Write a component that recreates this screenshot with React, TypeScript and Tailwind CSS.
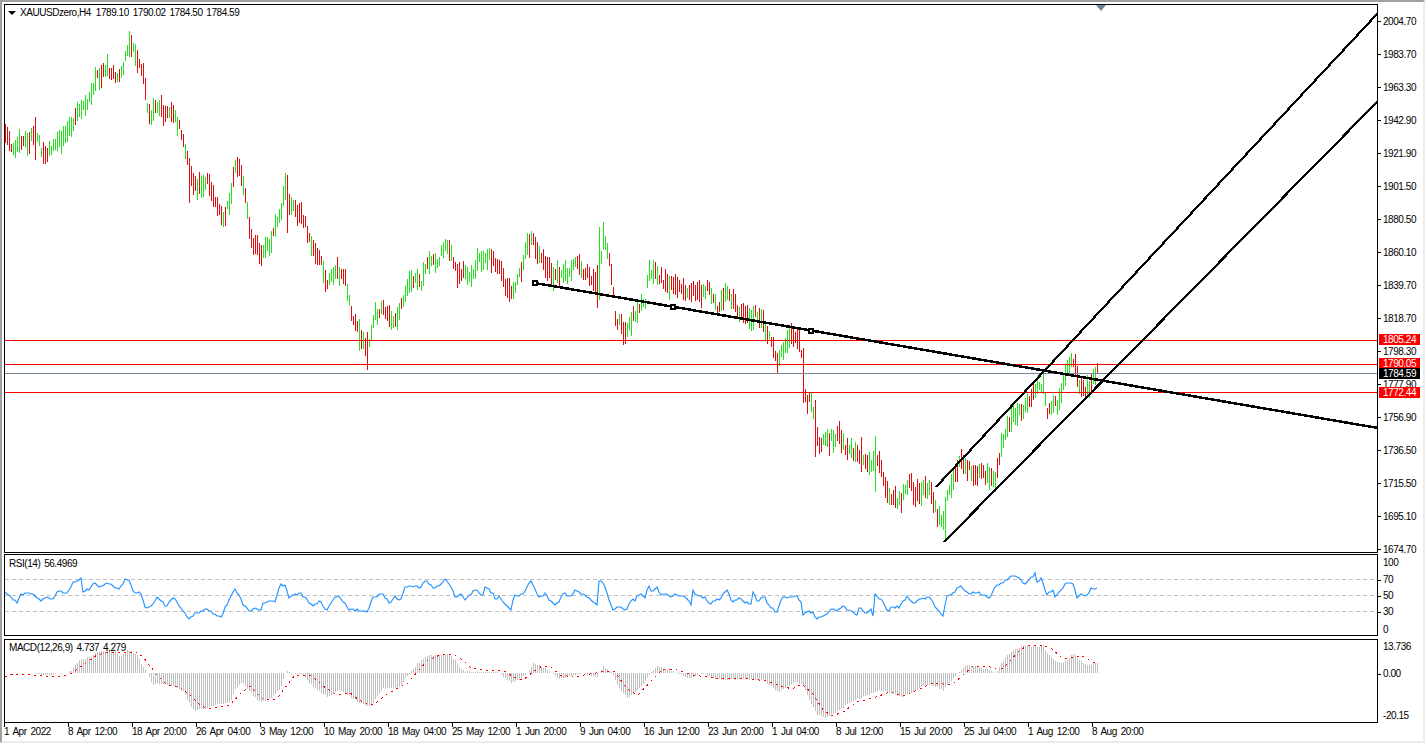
const FONT = "font-['Liberation_Sans',Arial,sans-serif] text-[10px] tracking-[-0.45px] [word-spacing:1.5px] leading-none text-black";

// page-pixel waypoints read off the reference: x, mid y of the bars
const PRICE: [number, number][] = [
  [5,130],[10,145],[13,152],[20,140],[27,142],[35,135],[43,155],[50,150],[57,145],[65,132],[72,125],[82,105],[88,100],[95,80],[102,75],[107,68],[112,72],[118,78],[122,68],[128,50],[132,48],[137,62],[142,70],[147,105],[150,117],[157,105],[165,115],[172,108],[178,125],[183,140],[188,165],[192,185],[200,185],[207,178],[212,190],[222,220],[228,205],[235,170],[239,165],[245,195],[250,240],[262,255],[270,242],[277,225],[282,205],[285,185],[290,205],[300,215],[305,225],[310,245],[320,255],[325,285],[335,270],[345,280],[352,318],[360,335],[367,350],[375,315],[383,310],[392,325],[398,315],[403,300],[410,280],[420,285],[428,262],[432,257],[437,263],[445,245],[450,250],[457,272],[465,272],[470,277],[480,258],[490,256],[500,267],[505,285],[512,296],[520,272],[527,247],[532,237],[540,258],[552,275],[562,277],[575,263],[590,277],[598,285],[603,240],[610,262],[615,318],[625,333],[632,320],[640,303],[645,300],[648,270],[655,272],[665,283],[680,288],[693,290],[700,293],[708,288],[717,307],[728,293],[740,313],[750,317],[755,313],[765,327],[770,340],[777,365],[782,350],[790,336],[800,340],[803,372],[806,402],[812,400],[815,430],[820,445],[830,440],[838,435],[845,446],[855,455],[860,453],[870,468],[875,464],[880,461],[885,487],[888,498],[895,500],[900,503],[905,488],[910,484],[915,495],[922,489],[930,492],[935,508],[940,522],[943,525],[945,500],[948,490],[953,482],[960,460],[965,470],[970,468],[975,477],[980,470],[985,478],[992,475],[996,480],[998,458],[1003,440],[1010,423],[1015,413],[1020,414],[1026,407],[1032,396],[1037,384],[1043,385],[1047,414],[1052,404],[1058,407],[1065,375],[1070,361],[1075,361],[1078,385],[1082,393],[1088,388],[1092,377],[1097,369],
];

// long bars that stand out: x, top, bottom, up
const SPIKES: [number, number, number, boolean][] = [
  [35,117,160,false],[129,31,57,true],[131,35,57,false],[189,158,203,false],[237,157,177,false],[285,173,200,true],[287,175,233,false],[359,319,351,true],[367,332,370,false],[597,265,308,false],[599,227,300,true],[603,222,250,true],[777,353,373,false],[803,348,403,false],[815,400,457,false],[861,437,472,false],[875,436,492,true],[945,497,540,true],[1097,363,373,false],
];

const RSI: [number, number][] = [
  [5,592],[13,600],[17,603],[20,594],[27,593],[33,593],[40,601],[45,597],[53,599],[59,590],[63,592],[68,593],[72,583],[78,582],[81,577],[83,592],[90,588],[95,582],[100,587],[108,582],[115,588],[122,587],[124,580],[129,579],[133,592],[140,593],[145,606],[150,608],[157,598],[167,607],[170,599],[174,598],[180,607],[189,619],[198,612],[207,609],[213,614],[222,617],[224,610],[235,589],[242,602],[250,613],[255,608],[260,612],[263,603],[275,601],[280,584],[283,587],[286,584],[288,598],[300,593],[307,600],[313,606],[320,601],[327,611],[333,599],[340,597],[348,609],[358,610],[367,612],[373,598],[382,593],[389,603],[395,597],[400,600],[405,587],[413,586],[420,588],[423,583],[427,580],[432,588],[440,585],[445,580],[450,585],[456,599],[458,593],[465,599],[475,590],[483,595],[485,587],[493,593],[496,601],[499,595],[507,607],[511,609],[514,596],[522,595],[531,580],[539,597],[545,594],[552,603],[556,605],[564,593],[571,597],[575,591],[582,593],[592,600],[597,605],[599,582],[603,582],[613,610],[620,605],[625,611],[633,598],[635,601],[639,594],[645,597],[648,586],[653,592],[657,588],[660,595],[667,594],[672,597],[675,594],[685,598],[692,605],[693,591],[700,597],[705,597],[709,604],[720,599],[727,589],[732,601],[740,599],[745,603],[752,604],[753,592],[757,601],[765,597],[768,604],[777,613],[782,598],[797,596],[802,603],[803,615],[808,612],[813,613],[816,619],[827,613],[832,609],[838,611],[843,607],[857,614],[859,607],[865,613],[872,608],[873,615],[875,595],[882,600],[888,611],[893,606],[898,608],[907,596],[913,603],[920,598],[930,598],[937,609],[943,615],[947,595],[953,593],[960,585],[965,592],[970,594],[978,592],[989,598],[997,585],[1003,582],[1013,575],[1018,578],[1025,583],[1035,574],[1037,583],[1042,578],[1046,595],[1053,589],[1055,596],[1068,582],[1073,583],[1077,597],[1080,594],[1087,595],[1092,587],[1097,589],
];

const HIST: [number, number][] = [
  [5,671],[33,671],[43,673],[67,671],[72,668],[80,657],[90,655],[97,650],[113,648],[120,655],[128,648],[137,653],[142,663],[147,671],[152,682],[163,682],[173,684],[183,690],[190,703],[195,708],[203,707],[213,703],[230,700],[235,687],[242,680],[250,690],[260,701],[270,697],[280,687],[286,668],[292,672],[302,672],[313,685],[327,695],[340,688],[357,700],[370,705],[382,687],[400,685],[405,677],[410,671],[417,662],[428,653],[440,653],[450,652],[458,663],[465,670],[497,670],[512,681],[523,675],[528,670],[533,661],[542,665],[552,671],[558,677],[573,674],[582,671],[597,675],[603,664],[612,671],[618,685],[627,696],[633,692],[643,682],[650,671],[657,664],[667,668],[677,671],[690,677],[700,671],[720,678],[740,677],[763,678],[778,690],[795,680],[803,683],[810,700],[817,712],[825,716],[840,707],[857,697],[880,688],[903,695],[927,682],[943,688],[957,671],[967,663],[987,667],[995,672],[1000,663],[1007,653],[1015,647],[1023,644],[1043,644],[1048,653],[1057,660],[1063,661],[1073,652],[1085,663],[1095,661],[1098,661],
];

const SIGNAL: [number, number][] = [
  [5,675],[13,672],[30,673],[57,675],[70,672],[83,663],[97,653],[110,650],[137,650],[143,655],[157,673],[167,683],[180,685],[190,693],[200,703],[208,707],[230,703],[240,692],[250,684],[263,697],[277,697],[287,683],[295,673],[310,673],[327,687],[337,693],[350,691],[362,700],[373,703],[387,692],[400,685],[407,682],[417,670],[428,658],[440,653],[452,652],[463,658],[470,665],[483,668],[500,668],[507,670],[513,675],[523,678],[533,670],[542,664],[550,664],[560,673],[573,675],[590,672],[607,669],[615,670],[627,687],[638,693],[653,677],[663,667],[677,668],[693,673],[700,674],[720,677],[743,676],[767,679],[778,683],[792,687],[802,682],[813,692],[823,708],[832,714],[843,710],[857,700],[873,696],[890,690],[903,694],[917,688],[933,681],[952,683],[963,673],[973,664],[987,664],[995,667],[1003,666],[1010,659],[1020,648],[1027,644],[1043,643],[1052,647],[1063,657],[1075,655],[1082,654],[1093,660],[1097,661],
];

function interp(pts: [number, number][], x: number) {
  for (let i = 1; i < pts.length; i++) {
    if (x <= pts[i][0]) {
      const [x0, y0] = pts[i - 1];
      const [x1, y1] = pts[i];
      return y0 + ((y1 - y0) * (x - x0)) / (x1 - x0 || 1);
    }
  }
  return pts[pts.length - 1][1];
}

// small seeded generator so every render gives the same bars
let seed = 20220808;
function rnd() {
  seed = (seed * 1664525 + 1013904223) % 4294967296;
  return seed / 4294967296;
}

function buildBars() {
  let up = '';
  let down = '';
  for (let x = 5; x <= 1097; x += 2) {
    const spike = SPIKES.find((s) => Math.abs(s[0] - x) < 1);
    if (spike) {
      const d = `M${x + 0.5} ${spike[1]}V${spike[2]}`;
      if (spike[3]) up += d;
      else down += d;
      continue;
    }
    const mid = interp(PRICE, x) + (rnd() - 0.5) * 9;
    const len = 8 + rnd() * 16;
    const slope = interp(PRICE, x + 4) - interp(PRICE, x - 4);
    const isUp = slope === 0 ? rnd() > 0.5 : slope < 0 ? rnd() > 0.22 : rnd() > 0.78;
    const d = `M${x + 0.5} ${Math.round(mid - len / 2)}V${Math.round(mid + len / 2)}`;
    if (isUp) up += d;
    else down += d;
  }
  return { up, down };
}

function buildHist() {
  let d = '';
  for (let x = 5; x <= 1097; x += 2) {
    const y = Math.round(interp(HIST, x) + (rnd() - 0.5) * 1.2);
    d += `M${x + 0.5} 671V${y}`;
  }
  return d;
}

// one point per bar with a little wobble, so the line has the reference's jagged steps
function buildRsi() {
  const pts: string[] = [];
  for (let x = 5; x <= 1097; x += 2) {
    pts.push(`${x},${Math.round(interp(RSI, x) + (rnd() - 0.5) * 2.4)}`);
  }
  return pts.join(' ');
}

const toPoints = (pts: [number, number][]) => pts.map((p) => p.join(',')).join(' ');

const bars = buildBars();
const hist = buildHist();
const rsi = buildRsi();

const PRICES = ['2004.70','1983.70','1963.30','1942.90','1921.90','1901.50','1880.50','1860.10','1839.70','1818.70','1798.30','1777.90','1756.90','1736.50','1715.50','1695.10','1674.70'];
const TIMES = ['1 Apr 2022','8 Apr 12:00','18 Apr 20:00','26 Apr 04:00','3 May 12:00','10 May 20:00','18 May 04:00','25 May 12:00','1 Jun 20:00','9 Jun 04:00','16 Jun 12:00','23 Jun 20:00','1 Jul 04:00','8 Jul 12:00','15 Jul 20:00','25 Jul 04:00','1 Aug 12:00','8 Aug 20:00'];

function Tick() {
  return <span className="w-[3px] h-px bg-black mr-[2px] shrink-0" />;
}

function PriceTag({ value, black, className }: { value: string; black?: boolean; className: string }) {
  return (
    <div className={`absolute left-px w-[41px] h-[11px] pt-px flex items-center justify-center text-white ${black ? 'bg-black' : 'bg-[#ff0000]'} ${className}`}>
      {value}
    </div>
  );
}

function Anchor({ x, y }: { x: number; y: number }) {
  return <rect x={x - 2} y={y - 2} width="4" height="4" fill="#fff" stroke="#000" strokeWidth="2" />;
}

export default function App() {
  return (
    <div className={`w-[1425px] h-[743px] overflow-hidden bg-white border-t-2 border-l-2 border-t-[#a0a0a0] border-l-[#a0a0a0] border-r-2 border-b-2 border-r-[#ececec] border-b-[#ececec] pt-[2px] pl-[2px] ${FONT}`}>
      {/* price pane */}
      <div className="flex">
        <div className="relative w-[1374px] h-[549px] border border-black">
          <svg width="1372" height="547" viewBox="5 5 1372 547" className="block" shapeRendering="crispEdges">
            <path d={bars.down} stroke="#e30b0b" fill="none" />
            <path d={bars.up} stroke="#22e41c" fill="none" />
            <g stroke="#ff0000" strokeWidth="1">
              <line x1="5" x2="1377" y1="340.5" y2="340.5" />
              <line x1="5" x2="1377" y1="364.5" y2="364.5" />
              <line x1="5" x2="1377" y1="392.5" y2="392.5" />
            </g>
            <line x1="5" x2="1377" y1="373.5" y2="373.5" stroke="#778899" />
            <g stroke="#000" fill="none">
              <line x1="535" y1="283" x2="1378" y2="428" strokeWidth="2.5" />
              <line x1="936" y1="487" x2="1378" y2="13" strokeWidth="2.2" />
              <line x1="944" y1="542" x2="1378" y2="101" strokeWidth="2.2" />
            </g>
            <Anchor x={535} y={283} />
            <Anchor x={673} y={307} />
            <Anchor x={811} y={331} />
          </svg>
          <div className="absolute left-[3px] top-[2px] flex items-center gap-[4px] h-[12px]">
            <span className="w-0 h-0 border-l-[4px] border-r-[4px] border-t-[4px] border-l-transparent border-r-transparent border-t-black" />
            <span>XAUUSDzero,H4</span>
            <span className="ml-px">1789.10 1790.02 1784.50 1784.59</span>
          </div>
          <span className="absolute left-[1091px] top-0 w-0 h-0 border-l-[5px] border-r-[5px] border-t-[6px] border-l-transparent border-r-transparent border-t-[#6f8499]" />
        </div>
        <div className="relative flex flex-col w-[45px] h-[549px] pt-px">
          {PRICES.map((p) => (
            <div key={p} className="h-[33px] shrink-0 flex items-center">
              <Tick />
              <span>{p}</span>
            </div>
          ))}
          <PriceTag value="1805.24" className="top-[330px]" />
          <PriceTag value="1790.05" className="top-[354px]" />
          <PriceTag value="1784.59" black className="top-[364px]" />
          <PriceTag value="1772.44" className="top-[383px]" />
        </div>
      </div>

      {/* RSI pane */}
      <div className="flex mt-px">
        <div className="relative w-[1374px] h-[82px] border border-black">
          <svg width="1372" height="80" viewBox="5 555 1372 80" className="block">
            <g stroke="#c0c0c0" strokeDasharray="4 3" shapeRendering="crispEdges">
              <line x1="5" x2="1377" y1="579.5" y2="579.5" />
              <line x1="5" x2="1377" y1="595.5" y2="595.5" />
              <line x1="5" x2="1377" y1="611.5" y2="611.5" />
            </g>
            <polyline points={rsi} fill="none" stroke="#1e90ff" strokeWidth="1.1" />
          </svg>
          <span className="absolute left-[4px] top-[3px] leading-[12px]">RSI(14) 56.4969</span>
        </div>
        <div className="flex flex-col w-[45px] pt-px">
          <div className="h-[16px] flex items-center pl-[5px]">100</div>
          <div className="h-[16px] mt-px flex items-center"><Tick />70</div>
          <div className="h-[16px] flex items-center"><Tick />50</div>
          <div className="h-[16px] flex items-center"><Tick />30</div>
          <div className="h-[16px] mt-[2px] flex items-center pl-[5px]">0</div>
        </div>
      </div>

      {/* MACD pane */}
      <div className="flex mt-px">
        <div className="relative w-[1374px] h-[84px] border border-black">
          <svg width="1372" height="82" viewBox="5 638 1372 82" className="block">
            <path d={hist} stroke="#c0c0c0" fill="none" shapeRendering="crispEdges" />
            <polyline points={toPoints(SIGNAL)} fill="none" stroke="#ff0000" strokeWidth="1" strokeDasharray="2 4" shapeRendering="crispEdges" />
          </svg>
          <span className="absolute left-[4px] top-[2px] leading-[12px]">MACD(12,26,9) 4.737 4.279</span>
        </div>
        <div className="flex flex-col w-[45px] pt-px">
          <div className="h-[14px] flex items-center pl-[5px]">13.736</div>
          <div className="h-[14px] mt-[13px] flex items-center"><Tick />0.00</div>
          <div className="h-[14px] mt-[28px] flex items-center pl-[5px]">-20.15</div>
        </div>
      </div>

      {/* time axis */}
      <div className="flex">
        {TIMES.map((t) => (
          <div key={t} className="w-[64px] shrink-0 flex flex-col items-start">
            <span className="w-px h-[4px] bg-black" />
            <span className="whitespace-nowrap leading-[9px]">{t}</span>
          </div>
        ))}
      </div>
    </div>
  );
}
